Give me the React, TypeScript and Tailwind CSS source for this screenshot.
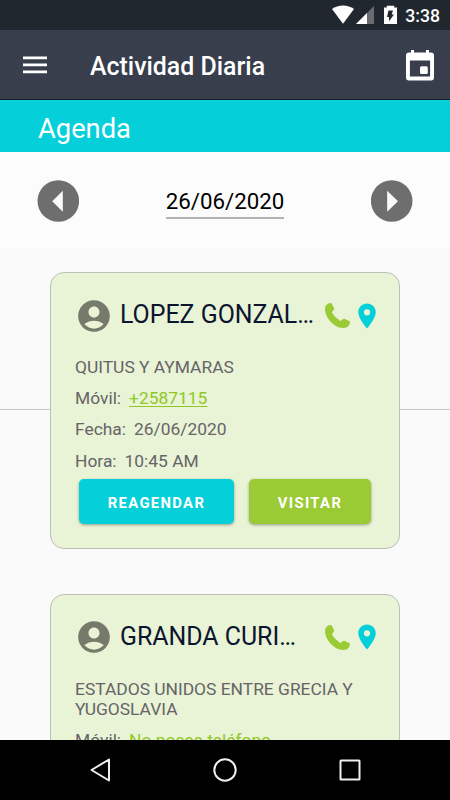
import { MdAccountCircle, MdPlace } from "react-icons/md";

const visits = [
  {
    id: 1,
    name: "LOPEZ GONZAL…",
    address: "QUITUS Y AYMARAS",
    phone: "+2587115",
    date: "26/06/2020",
    time: "10:45 AM",
  },
  {
    id: 2,
    name: "GRANDA CURI…",
    address: "ESTADOS UNIDOS ENTRE GRECIA Y YUGOSLAVIA",
    phone: "No posee teléfono",
  },
];

const StatusBar = () => {
  return (
    <div className="flex h-[30px] shrink-0 items-center justify-end bg-[#21272e] pr-[10px] text-white">
      <svg width="65" height="20" viewBox="0 0 65 20" className="mr-[8px]">
        <path d="M0 4C6 -0.7 16 -0.7 22 4L11 18.7Z" fill="currentColor" />
        <path d="M42 1V19H24Z" fill="#686c70" />
        <path d="M35 8V19H24Z" fill="currentColor" />
        <path
          d="M54.800 .800h7.400v1.700H65V19H52V2.500h2.800Z"
          fill="currentColor"
        />
        <path d="M56.500 5.500H61L59.700 9.500H62L57 16.200V12H55Z" fill="#21272e" />
      </svg>
      <span className="pt-[3px] text-[17.6px] leading-none font-medium">
        3:38
      </span>
    </div>
  );
};

const Toolbar = () => {
  return (
    <header className="flex h-[70px] shrink-0 items-center border-b border-[#171c26] bg-[#383e4b] pt-[2px] pr-[16px] pl-[23px] text-white">
      <svg
        width="24"
        height="18"
        viewBox="0 0 24 18"
        fill="currentColor"
        className="-mt-[2px]"
      >
        <path d="M0 0.500h24v2.700H0zM0 7.500h24v2.700H0zM0 14.500h24v2.700H0z" />
      </svg>
      <h1 className="ml-[43px] flex-1 pt-[3px] text-[24.9px] leading-none font-medium">
        Actividad Diaria
      </h1>
      <svg width="28" height="31" viewBox="0 0 28 31" fill="currentColor">
        <path
          fillRule="evenodd"
          d="M5 0h3v2.500h12V0h3v2.500h2a3 3 0 0 1 3 3v22a3 3 0 0 1-3 3H3a3 3 0 0 1-3-3v-22a3 3 0 0 1 3-3h2ZM3.900 10.500v16h20.200v-16Z"
        />
        <rect x="14" y="16.200" width="7.800" height="7.800" rx="1.500" />
      </svg>
    </header>
  );
};

const DatePicker = () => {
  return (
    <div className="flex h-[96px] shrink-0 items-center justify-between bg-[#fcfcfc] px-[37px] pt-[2px]">
      <svg width="42" height="42" viewBox="0 0 42 42">
        <circle cx="21.300" cy="21" r="20.800" fill="#6e6e6e" />
        <path d="M25.800 10.700v21L15.200 21.200Z" fill="#fafafa" />
      </svg>
      <span className="mt-[3px] border-b-2 border-[#b2b2b2] pb-[2px] text-[22.3px] leading-[28px] text-black">
        26/06/2020
      </span>
      <svg width="42" height="42" viewBox="0 0 42 42">
        <circle cx="20.700" cy="21" r="20.800" fill="#6e6e6e" />
        <path d="M16.200 10.700v21L27 21.200Z" fill="#fafafa" />
      </svg>
    </div>
  );
};

const PhoneIcon = () => {
  return (
    <svg
      width="25"
      height="25"
      viewBox="0 0 25 25"
      fill="#9acb34"
      className="mr-[1.5px] shrink-0"
    >
      <path d="M5.600 .100Q6.400 -.100 6.800 .700L9 5.100Q9.300 5.800 8.900 6.400L7.200 9Q6.900 9.500 7.200 10Q10.200 14.900 15 17.800Q15.600 18.100 16.100 17.600L18.100 16Q18.700 15.500 19.400 15.800L24.500 18.200Q25.200 18.600 25 19.300C24.300 23 22.200 25 18.300 25C13 25 8.200 21.900 4.800 17.800C1.900 14.300 -.300 9.700 0 5.400C.200 2.500 2.200 .300 5.600 .100Z" />
    </svg>
  );
};

const VisitCard = ({ visit }: { visit: (typeof visits)[number] }) => {
  return (
    <article className="mx-[50px] rounded-[14px] border border-[#bcbfb9] bg-[#e9f3d5] px-[24px] pt-[23.5px] pb-[24px] text-[17.4px] text-[#666468]">
      <div className="flex h-[38px] items-center">
        <MdAccountCircle className="size-[38px] shrink-0 text-[#757a6b]" />
        <h2 className="ml-[7px] flex-1 text-[24.9px] leading-none whitespace-nowrap text-[#0b1530]">
          {visit.name}
        </h2>
        <PhoneIcon />
        <MdPlace className="mr-[-6.5px] size-[30px] shrink-0 text-[#05d0da]" />
      </div>

      <p className="mt-[22.5px] leading-[20.5px]">{visit.address}</p>
      <p className="mt-[10.5px] leading-[21px]">
        Móvil:
        <span className="ml-2 text-[#8fc926] underline decoration-1 underline-offset-2">
          {visit.phone}
        </span>
      </p>
      {visit.date && (
        <>
          <p className="mt-[10.3px] leading-[21px]">
            Fecha:<span className="ml-2">{visit.date}</span>
          </p>
          <p className="mt-[10.3px] leading-[21px]">
            Hora:<span className="ml-2">{visit.time}</span>
          </p>

          <div className="mt-[7px] flex gap-[15px] pl-1 text-[14.8px] font-bold tracking-[1.35px] text-white">
            <button className="h-[45px] w-[155px] rounded-[5px] bg-[#05d0da] pt-[3px] shadow-[0_1px_3px_rgba(0,0,0,0.35)]">
              REAGENDAR
            </button>
            <button className="h-[45px] w-[122px] rounded-[5px] bg-[#9acb34] pt-[3px] shadow-[0_1px_3px_rgba(0,0,0,0.35)]">
              VISITAR
            </button>
          </div>
        </>
      )}
    </article>
  );
};

const NavigationBar = () => {
  return (
    <nav className="flex h-[60px] shrink-0 items-center justify-between bg-black pr-[89px] pl-[90px]">
      <svg width="21" height="24" viewBox="0 0 21 24" fill="none" stroke="#eee" strokeWidth="2">
        <path d="M19 1.500v21L1.500 12Z" strokeLinejoin="round" />
      </svg>
      <svg width="24" height="24" viewBox="0 0 24 24" fill="none" stroke="#eee" strokeWidth="2">
        <circle cx="12" cy="12" r="10.700" />
      </svg>
      <svg width="22" height="22" viewBox="0 0 22 22" fill="none" stroke="#eee" strokeWidth="2">
        <rect x="1.500" y="1.500" width="19" height="19" rx="0.500" />
      </svg>
    </nav>
  );
};

const App = () => {
  return (
    <div className="flex h-[800px] w-[450px] flex-col overflow-hidden bg-[#fafafa] font-['Roboto',sans-serif]">
      <StatusBar />
      <Toolbar />
      <div className="flex h-[52px] shrink-0 items-center bg-[#05d0da] pt-[7px] pl-[38px] text-[27.3px] leading-none text-white">
        Agenda
      </div>
      <DatePicker />
      <main className="relative min-h-0 flex-1 overflow-hidden pt-[24px]">
        <div className="absolute top-[161px] h-px w-full bg-[#c6c6c6]" />
        <div className="relative flex flex-col gap-[45px]">
          {visits.map((visit) => (
            <VisitCard key={visit.id} visit={visit} />
          ))}
        </div>
      </main>
      <NavigationBar />
    </div>
  );
};

export default App;
